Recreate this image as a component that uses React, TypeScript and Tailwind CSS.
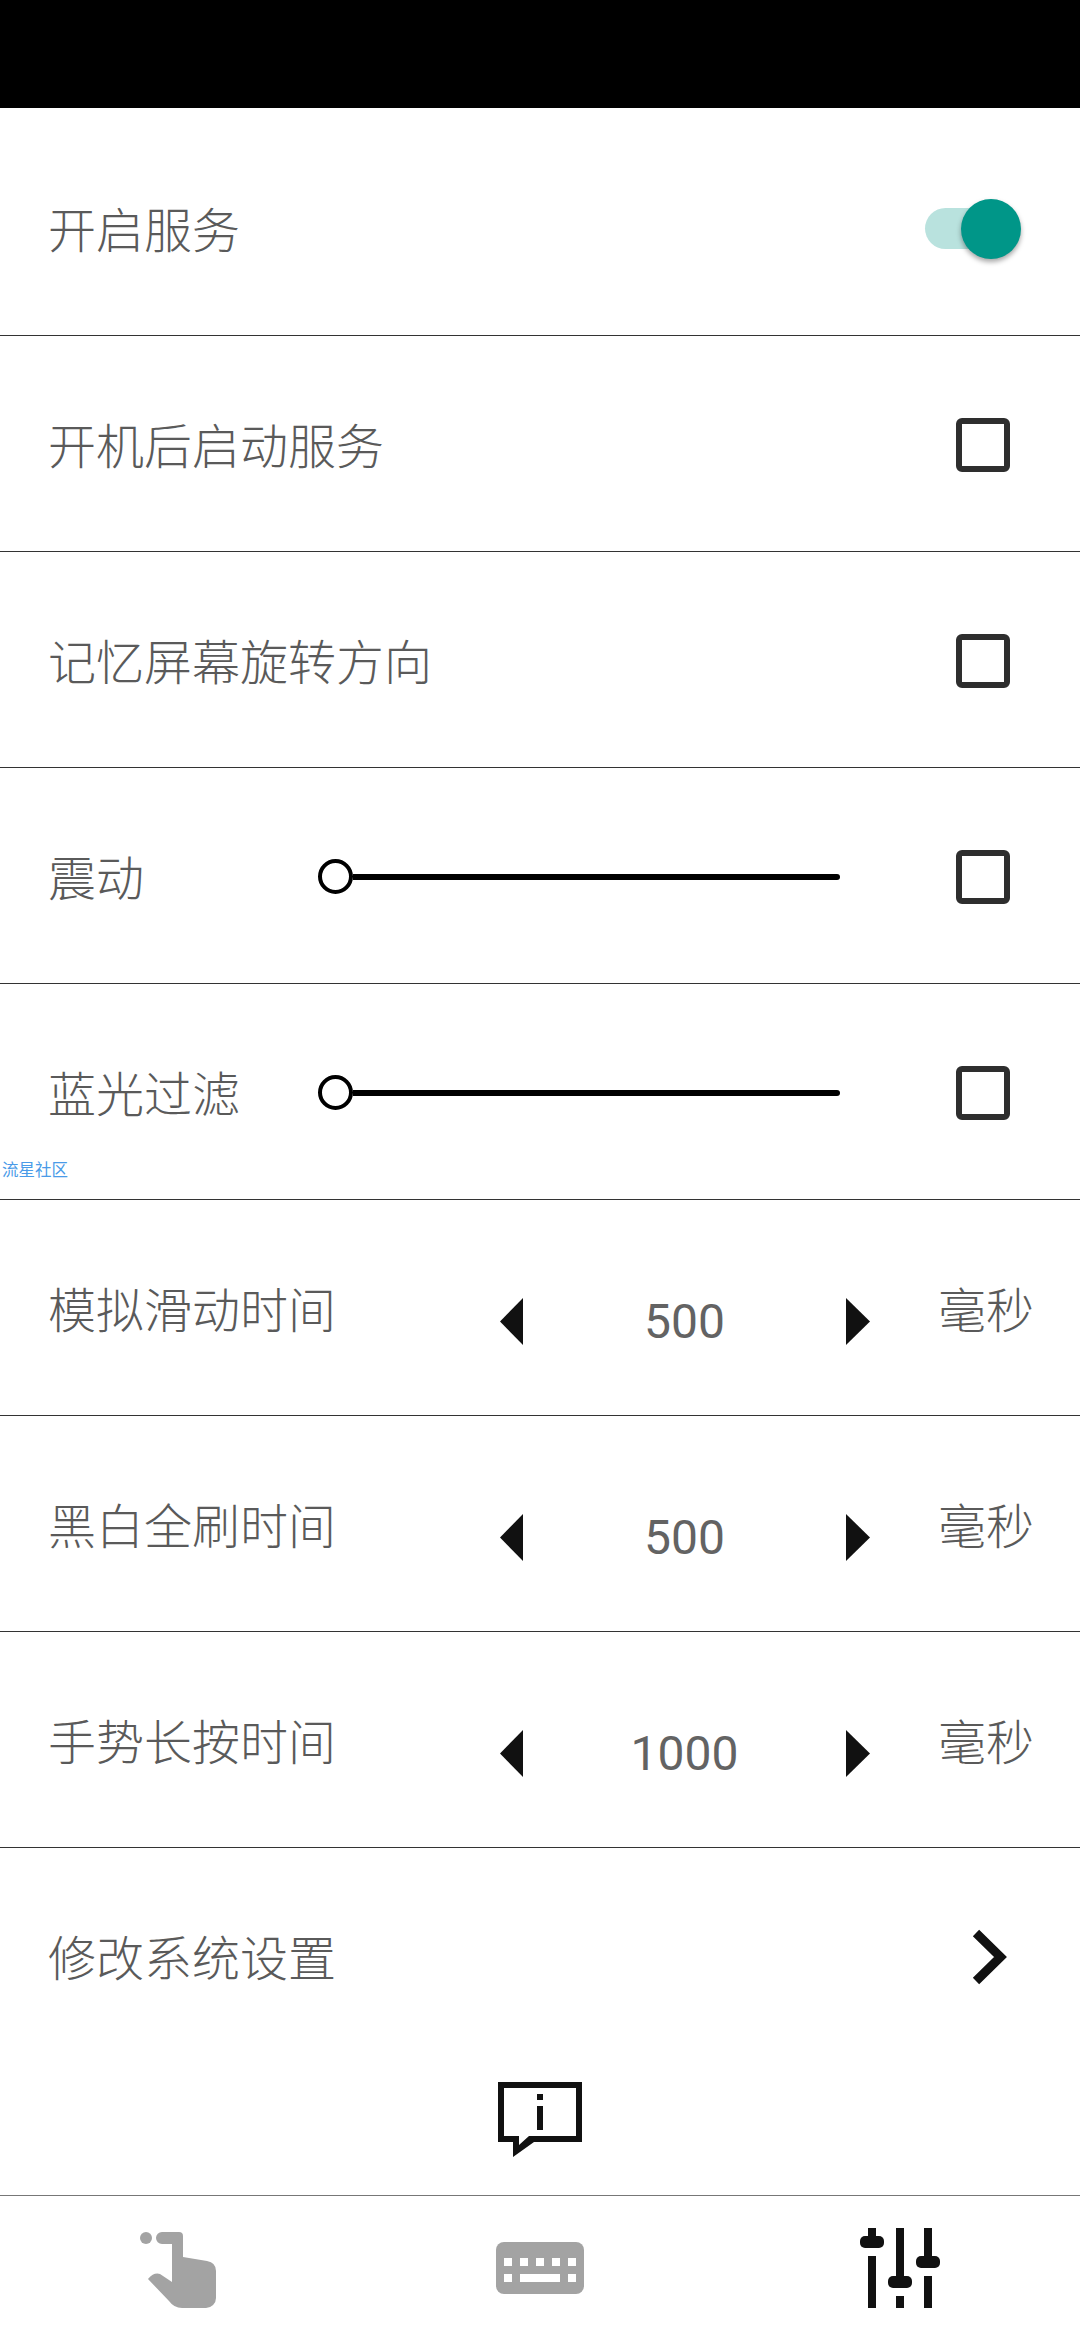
const LABEL = "pb-[4px] text-[48px] font-light leading-[64px] text-[#5a5a5a]";

function Row({ children, last = false, tall = false }: { children: React.ReactNode; last?: boolean; tall?: boolean }) {
  return (
    <div
      className={`flex items-center pl-[48px] ${tall ? "h-[228px] pt-[14px]" : "h-[216px] pt-[2px]"} ${
        last ? "" : "border-b border-[#333]"
      }`}
    >
      {children}
    </div>
  );
}

function Checkbox() {
  return <div className="ml-auto mr-[70px] h-[54px] w-[54px] rounded-[6px] border-[6px] border-[#2e2e2e]" />;
}

function Slider() {
  return (
    <div className="flex w-[522px] items-center">
      <div className="h-[35px] w-[35px] shrink-0 rounded-full border-[4px] border-black" />
      <div className="h-[6px] flex-1 rounded-r-full bg-black" />
    </div>
  );
}

function Stepper({ value }: { value: number }) {
  return (
    <>
      <div className="ml-auto mt-[26px] flex w-[370px] items-center">
        <svg width="23" height="47" viewBox="0 0 23 47" className="shrink-0">
          <polygon points="23,0 23,47 0,23.5" fill="#111" />
        </svg>
        <span className="flex-1 text-center font-['Roboto',sans-serif] text-[48px] leading-[64px] text-[#636363]">{value}</span>
        <svg width="24" height="47" viewBox="0 0 24 47" className="shrink-0">
          <polygon points="0,0 24,23.5 0,47" fill="#111" />
        </svg>
      </div>
      <span className={`${LABEL} ml-[68px] mr-[46px]`}>毫秒</span>
    </>
  );
}

function HandIcon() {
  return (
    <svg width="96" height="96" viewBox="0 0 96 96" fill="#a3a3a3">
      <circle cx="14" cy="18" r="6" />
      <path d="M30 12H47a4 4 0 0 1 4 4V37L75 41Q84 42.500 84 51V78a10 10 0 0 1-10 10H50Q42 88 37 81L16 59Q22 52 28 54L40 62V24H30a6 6 0 0 1 0-12Z" />
    </svg>
  );
}

function KeyboardIcon() {
  return (
    <svg width="96" height="96" viewBox="0 0 96 96">
      <rect x="4" y="22" width="88" height="52" rx="8" fill="#a3a3a3" />
      <g fill="#fff">
        <rect x="12" y="38" width="8" height="8" />
        <rect x="28" y="38" width="8" height="8" />
        <rect x="44" y="38" width="8" height="8" />
        <rect x="60" y="38" width="8" height="8" />
        <rect x="76" y="38" width="8" height="8" />
        <rect x="12" y="54" width="8" height="8" />
        <rect x="28" y="54" width="40" height="8" />
        <rect x="76" y="54" width="8" height="8" />
      </g>
    </svg>
  );
}

function TuneIcon() {
  return (
    <svg width="96" height="96" viewBox="0 0 96 96" fill="#111">
      <rect x="16" y="8" width="8" height="10" />
      <rect x="8" y="16" width="24" height="12" rx="5" />
      <rect x="16" y="36" width="8" height="52" />
      <rect x="44" y="8" width="8" height="50" />
      <rect x="36" y="56" width="24" height="12" rx="5" />
      <rect x="44" y="76" width="8" height="12" />
      <rect x="72" y="8" width="8" height="30" />
      <rect x="64" y="36" width="24" height="12" rx="5" />
      <rect x="72" y="56" width="8" height="32" />
    </svg>
  );
}

export default function App() {
  return (
    <div className="relative flex h-[2340px] w-[1080px] flex-col overflow-hidden bg-white font-['Noto_Sans_CJK_SC',sans-serif]">
      <div className="h-[108px] bg-black" />

      <Row tall>
        <span className={LABEL}>开启服务</span>
        <div className="relative ml-auto mr-[59px] flex h-[60px] w-[96px] items-center">
          <div className="h-[41px] w-[86px] rounded-full bg-[#b9e2de]" />
          <div className="absolute right-0 top-0 h-[60px] w-[60px] rounded-full bg-[#009688] shadow-[0_3px_5px_rgba(0,0,0,0.35)]" />
        </div>
      </Row>

      <Row>
        <span className={LABEL}>开机后启动服务</span>
        <Checkbox />
      </Row>
      <Row>
        <span className={LABEL}>记忆屏幕旋转方向</span>
        <Checkbox />
      </Row>
      <Row>
        <span className={`${LABEL} w-[270px]`}>震动</span>
        <Slider />
        <Checkbox />
      </Row>
      <Row>
        <span className={`${LABEL} w-[270px]`}>蓝光过滤</span>
        <Slider />
        <Checkbox />
      </Row>

      <Row>
        <span className={LABEL}>模拟滑动时间</span>
        <Stepper value={500} />
      </Row>
      <Row>
        <span className={LABEL}>黑白全刷时间</span>
        <Stepper value={500} />
      </Row>
      <Row>
        <span className={LABEL}>手势长按时间</span>
        <Stepper value={1000} />
      </Row>

      <Row last>
        <span className={LABEL}>修改系统设置</span>
        <svg width="48" height="64" viewBox="0 0 48 64" className="ml-auto mr-[64px] -mt-[1px]">
          <path d="M8 8L32.500 32L8 56" fill="none" stroke="#111" strokeWidth="9" />
        </svg>
      </Row>

      <div className="flex h-[131px] justify-center pt-[12px]">
        <svg width="96" height="84" viewBox="0 0 96 84" fill="#111">
          <path
            fillRule="evenodd"
            d="M6 6H90V66H42L21 81V66H6ZM12 12V60H27V69L37 60H84V12Z"
          />
          <rect x="45" y="18" width="6" height="6" />
          <rect x="45" y="30" width="6" height="24" />
        </svg>
      </div>

      <nav className="grid h-[145px] grid-cols-3 items-center justify-items-center border-t border-[#777]">
        <HandIcon />
        <KeyboardIcon />
        <TuneIcon />
      </nav>

      {/* forum watermark over the list */}
      <span className="absolute left-[2px] top-[1159px] text-[16.500px] leading-[20px] text-[#4a9be8]">流星社区</span>
    </div>
  );
}
